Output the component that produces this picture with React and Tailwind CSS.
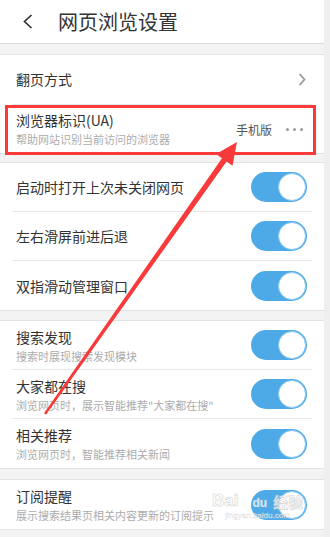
import React from 'react'

const FONT = "font-['Noto_Sans_CJK_SC','Noto_Sans',sans-serif]"

function Toggle() {
    return (
        <div className="w-[56px] h-[30px] rounded-full bg-[#4eaae6] flex items-center justify-end p-[1px] shrink-0">
            <div className="w-[28px] h-[28px] rounded-full bg-white border border-[#8ccaf1]" />
        </div>
    )
}

function SwitchRow({ title, sub, last }) {
    return (
        <div className={`mx-3 h-[49px] flex items-center justify-between pl-1 pr-[5px] ${last ? '' : 'border-b border-[#e8e8e8]'}`}>
            <div className="flex flex-col gap-[3px]">
                <div className="text-[14px] leading-[18px] text-[#333]">{title}</div>
                {sub && <div className="text-[11px] leading-[14px] text-[#acacac]">{sub}</div>}
            </div>
            <Toggle />
        </div>
    )
}

function Band({ h }) {
    return <div className={`${h} bg-[#f3f3f3]`} />
}

export default function App() {
    return (
        <div className={`relative w-[330px] h-[537px] overflow-hidden bg-[#efefef] ${FONT}`}>
            <div className="w-[324px]">
                {/* header */}
                <div className="h-[43px] bg-white flex items-center pl-[23px]">
                    <svg width="10" height="15" viewBox="0 0 10 15" fill="none">
                        <polyline points="8.5,1 1.5,7.5 8.5,14" stroke="#333" strokeWidth="1.7" />
                    </svg>
                    <span className="ml-[25px] text-[20px] leading-none text-[#333]">网页浏览设置</span>
                </div>
                <div className="h-[11px] bg-[#f3f3f3] border-t border-[#dcdcdc]" />

                {/* section 1 */}
                <div className="bg-white border-y border-[#e2e2e2]">
                    <div className="mx-3 h-[50px] flex items-center justify-between pl-1 pr-[6px] border-b border-[#e8e8e8]">
                        <span className="text-[14px] text-[#333]">翻页方式</span>
                        <svg width="8" height="13" viewBox="0 0 8 13" fill="none">
                            <polyline points="1.5,1 6.5,6.5 1.5,12" stroke="#999" strokeWidth="1.8" />
                        </svg>
                    </div>
                    <div className="mx-3 h-[48px] flex items-center justify-between pl-1 pr-[9px]">
                        <div className="flex flex-col gap-[3px] pb-[2px]">
                            <div className="text-[14px] leading-[18px] text-[#333]">浏览器标识(UA)</div>
                            <div className="text-[11px] leading-[14px] text-[#acacac]">帮助网站识别当前访问的浏览器</div>
                        </div>
                        <div className="flex items-center gap-[14px] pt-[1px]">
                            <span className="text-[12px] text-[#555]">手机版</span>
                            <div className="flex gap-[4px]">
                                <div className="w-[3px] h-[3px] rounded-full bg-[#9a9a9a]" />
                                <div className="w-[3px] h-[3px] rounded-full bg-[#9a9a9a]" />
                                <div className="w-[3px] h-[3px] rounded-full bg-[#9a9a9a]" />
                            </div>
                        </div>
                    </div>
                </div>
                <Band h="h-[8px]" />

                {/* section 2 */}
                <div className="bg-white border-y border-[#e2e2e2]">
                    <SwitchRow title="启动时打开上次未关闭网页" />
                    <SwitchRow title="左右滑屏前进后退" />
                    <SwitchRow title="双指滑动管理窗口" last />
                </div>
                <Band h="h-[9px]" />

                {/* section 3 */}
                <div className="bg-white border-y border-[#e2e2e2]">
                    <SwitchRow title="搜索发现" sub="搜索时展现搜索发现模块" />
                    <SwitchRow title="大家都在搜" sub={'浏览网页时，展示智能推荐"大家都在搜"'} />
                    <SwitchRow title="相关推荐" sub="浏览网页时，智能推荐相关新闻" last />
                </div>
                <Band h="h-[10px]" />

                {/* section 4 */}
                <div className="bg-white border-y border-[#e2e2e2]">
                    <SwitchRow title="订阅提醒" sub="展示搜索结果页相关内容更新的订阅提示" last />
                </div>
                <Band h="h-[12px]" />
            </div>

            {/* annotation box */}
            <div className="absolute left-[5px] top-[105px] w-[311px] h-[50px] border-[3px] border-[#f83a3a]" />

            {/* annotation arrow */}
            <svg className="absolute left-0 top-0 pointer-events-none" width="330" height="537" viewBox="0 0 330 537">
                <polygon
                    fill="#f83a3a"
                    points="237,142 232.5,165.7 226.6,161.5 46,414.7 44,413.3 222,158.3 216.1,154.1"
                />
            </svg>

            {/* watermark */}
            <div className="absolute left-[212px] top-[492px] pointer-events-none flex flex-col items-center">
                <div className="flex items-end font-['Liberation_Sans',sans-serif] text-[17px] font-bold leading-none text-white/70 [-webkit-text-stroke:0.6px_#d4d4d4]">
                    <span>Bai</span>
                    <span className="ml-[14px] text-[12px] text-white/80 [-webkit-text-stroke:0.4px_#bcd]">du</span>
                    <span className={`ml-[6px] text-[15px] ${FONT}`}>经验</span>
                </div>
                <div className="mt-[3px] text-[8px] leading-none text-white/60 font-['Liberation_Sans',sans-serif] [-webkit-text-stroke:0.3px_#d8d8d8]">jingyan.baidu.com</div>
            </div>
        </div>
    )
}
